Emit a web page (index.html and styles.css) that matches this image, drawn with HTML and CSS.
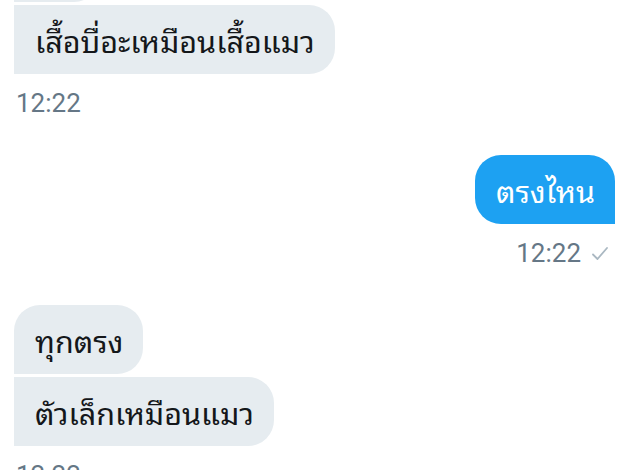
FILE: index.html
```html
<!DOCTYPE html>
<html lang="th">
<head>
<meta charset="utf-8">
<title>Chat</title>
<link rel="stylesheet" href="styles.css">
</head>
<body>
<main class="chat">
  <section class="group in">
    <div class="bubble in-first-clip">&nbsp;</div>
    <div class="bubble in-last">เสื้อบื่อะเหมือนเสื้อแมว</div>
    <div class="time">12:22</div>
  </section>
  <section class="group out">
    <div class="bubble out-single">ตรงไหน</div>
    <div class="time">12:22
      <svg class="check" width="18" height="16" viewBox="0 0 18 16" aria-hidden="true"><path d="M2 8.5 L6.5 13 L16 2" fill="none" stroke="#aab8c2" stroke-width="1.8" stroke-linecap="round" stroke-linejoin="round"/></svg>
    </div>
  </section>
  <section class="group in">
    <div class="bubble in-first">ทุกตรง</div>
    <div class="bubble in-last">ตัวเล็กเหมือนแมว</div>
    <div class="time">12:22</div>
  </section>
</main>
</body>
</html>
```
FILE: styles.css
```css
html, body {
  margin: 0;
  padding: 0;
  background: #ffffff;
}
body {
  font-family: Roboto, "Noto Sans Thai Looped", "Noto Sans Thai UI", "Noto Sans Thai", "Noto Sans", sans-serif;
  overflow: hidden;
}
.chat {
  display: flex;
  flex-direction: column;
  gap: 37px;
  padding: 0 21px 0 14px;
  margin-top: -67px;
}
.group {
  display: flex;
  flex-direction: column;
  gap: 3px;
}
.group.in { align-items: flex-start; }
.group.out { align-items: flex-end; }
.bubble {
  box-sizing: border-box;
  height: 69px;
  display: flex;
  align-items: center;
  padding: 0 20px 0 21px;
  font-size: 30.5px;
  border-radius: 26px;
  white-space: nowrap;
}
.in .bubble {
  background: #e6ecf0;
  color: #14171a;
}
.in-first-clip {
  width: 86px;
  border-top-left-radius: 26px;
  border-bottom-left-radius: 0;
}
.in-first { border-bottom-left-radius: 0; }
.in-last { border-top-left-radius: 0; border-bottom-left-radius: 0; }
.out .bubble {
  background: #1da1f2;
  color: #ffffff;
}
.out-single { border-bottom-right-radius: 0; }
.time {
  margin-top: 11px;
  font-size: 26px;
  line-height: 30px;
  color: #657786;
  display: flex;
  align-items: center;
  gap: 10px;
  padding-left: 2px;
}
.out .time { padding-left: 0; padding-right: 6px; }
.check { display: block; margin-top: 1px; }
```
